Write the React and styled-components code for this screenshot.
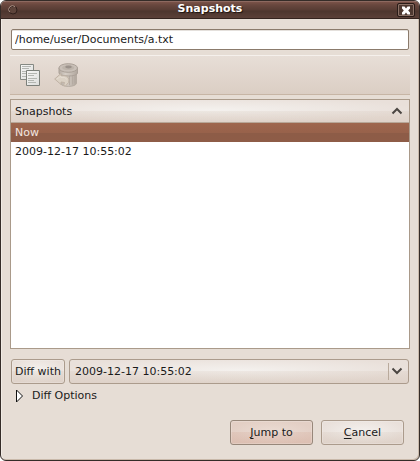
import React, { useState } from "react";
import styled, { createGlobalStyle } from "styled-components";

const GlobalStyle = createGlobalStyle`
  * { box-sizing: border-box; }
  body {
    margin: 0;
    background: #fff;
    color: #1a1a1a;
    font: 11px/15px "DejaVu Sans", sans-serif;
  }
  button, input, select { font: inherit; color: inherit; margin: 0; }
`;

const Window = styled.form`
  display: flex;
  flex-direction: column;
  min-height: 100vh;
  background: #e6ddd5;
  border: 1px solid #352c28;
  border-radius: 6px;
  box-shadow: inset -1px -1px #c9b9aa, inset 1px 0 #f1ebe5;
  overflow: hidden;
`;

const TitleBar = styled.header`
  display: grid;
  grid-template-columns: 24px 1fr 24px;
  grid-template-rows: 16px;
  align-items: center;
  height: 18px;
  background: linear-gradient(#7a5248 0, #68473e 3px, #573c34 8px, #4d362e 9px, #5b4038 16px);
  border-top: 1px solid #8d6960;
  border-bottom: 1px solid #34241f;
`;

const Title = styled.h1`
  margin: 0;
  padding-bottom: 2px;
  font-size: 11px;
  line-height: 12px;
  text-align: center;
  color: #fff;
  text-shadow: 1px 1px 1px #1c120f;
`;

const MenuButton = styled.button`
  display: flex;
  width: 10px;
  height: 10px;
  margin-left: 7px;
  padding: 0;
  border: 0;
  background: none;
`;

const CloseButton = styled.button`
  display: grid;
  place-items: center;
  width: 18px;
  height: 14px;
  justify-self: start;
  margin-left: 2px;
  padding: 0;
  border: 1px solid #291c18;
  border-radius: 2px;
  background: #4e3931;
  box-shadow: inset 0 0 0 1px #8b7166;
`;

const Content = styled.main`
  flex: 1;
  display: flex;
  flex-direction: column;
  padding: 10px 9px 15px;
`;

const PathInput = styled.input`
  height: 21px;
  margin: 0 1px 5px;
  padding: 0 3px 1px;
  border: 1px solid #8b7b6c;
  border-radius: 2px;
  background: #fff;
  outline: 0;
  box-shadow: inset 0 1px #e4e0dc;
`;

const Toolbar = styled.div`
  display: flex;
  align-items: center;
  gap: 12px;
  height: 40px;
  margin-bottom: 4px;
  padding-left: 8px;
  background: linear-gradient(#e7ded7, #dbcec4);
  border-top: 1px solid #f5f0ec;
  border-bottom: 1px solid #c7b5a5;
`;

const ToolButton = styled.button`
  display: flex;
  width: 24px;
  height: 24px;
  padding: 0;
  border: 0;
  background: none;
`;

const ListPanel = styled.div`
  flex: 1;
  background: #fff;
  border: 1px solid #aa9a8a;
`;

const Table = styled.table`
  width: 100%;
  border-collapse: collapse;

  th, td { padding: 0; text-align: left; }
`;

const glossy = `linear-gradient(
  #f0ebe700 0, #f0ebe700 50%, #c9b5a526 50%, #c9b5a552 100%
), radial-gradient(ellipse at 50% 45%, #f4f1ee, #e9e0da 75%)`;

const SortButton = styled.button`
  display: flex;
  align-items: center;
  justify-content: space-between;
  width: 100%;
  height: 23px;
  padding: 0 6px 0 4px;
  border: 0;
  border-bottom: 1px solid #b8a798;
  background: ${glossy};
  font-weight: normal;
`;

const Row = styled.tr`
  height: 19px;
  color: ${(p) => (p.$selected ? "#f2e6e0" : "#1a1a1a")};
  background: ${(p) =>
    p.$selected ? "linear-gradient(#9e664e, #98624b 50%, #8d5c47 50%, #8e5c47)" : "#fff"};

  td { padding: 0 4px 1px; }
`;

const DiffRow = styled.div`
  display: flex;
  gap: 4px;
  margin: 10px 1px 3px;
`;

const Button = styled.button`
  width: ${(p) => (p.$compact ? "54px" : "83px")};
  height: 25px;
  padding: 0;
  white-space: nowrap;
  border: 1px solid ${(p) => (p.$primary ? "#97877a" : "#ab9b8c")};
  border-radius: 3px;
  background: ${(p) =>
    p.$primary
      ? "linear-gradient(#ffffff00 50%, #c88f7826 50%, #c88f7840), radial-gradient(ellipse at center, #ebdcd4, #e3cfc5 75%)"
      : glossy};
  box-shadow: inset 0 0 0 1px #ffffff30;

  u { text-underline-offset: 2px; text-decoration-thickness: 1px; text-decoration-skip-ink: none; }
`;

const SelectFrame = styled.div`
  position: relative;
  flex: 1;
  display: flex;
`;

const Select = styled.select`
  appearance: none;
  width: 100%;
  height: 25px;
  padding: 0 24px 1px 5px;
  border: 1px solid #ab9b8c;
  border-radius: 3px;
  background: ${glossy};
  outline: 0;
`;

const SelectArrow = styled.span`
  position: absolute;
  top: 4px;
  right: 1px;
  display: grid;
  place-items: center;
  width: 20px;
  height: 17px;
  padding: 0 4px 1px 0;
  border-left: 1px solid #b9aa9c;
  pointer-events: none;
`;

const Expander = styled.button`
  display: flex;
  align-items: center;
  align-self: flex-start;
  gap: 7px;
  height: 16px;
  margin-bottom: 17px;
  padding: 0 0 0 5px;
  border: 0;
  background: none;

  svg { transform: ${(p) => (p.$open ? "rotate(90deg)" : "none")}; }
`;

const Triangle = styled.svg`
  margin-top: 2px;
`;

const Actions = styled.footer`
  display: flex;
  justify-content: flex-end;
  gap: 8px;
  padding-right: 6px;
`;

function Chevron({ up }) {
  return (
    <svg width="12" height="8" viewBox="0 0 12 8" fill="none" stroke="#4b4642" strokeWidth="2" aria-hidden="true">
      <path d={up ? "M1.500 6.500 6 2l4.500 4.500" : "M1.500 1.500 6 6l4.500-4.500"} />
    </svg>
  );
}

function MenuIcon() {
  return (
    <svg width="10" height="10" viewBox="0 0 10 10" fill="none" aria-hidden="true">
      <circle cx="5" cy="5" r="4" fill="#5d443b" stroke="#30201b" />
      <path d="M1.800 7.200A3.800 3.800 0 0 1 7.200 1.800" stroke="#a88f84" />
    </svg>
  );
}

function CloseIcon() {
  return (
    <svg width="10" height="9" viewBox="0 0 10 9" aria-hidden="true">
      <path d="M1 .5h2.500L5 2.500 6.500.5H9v2L7.200 4.500 9 6.500v2H6.500L5 6.500 3.500 8.500H1v-2l1.800-2L1 2.500z" fill="#fff" />
    </svg>
  );
}

function CopyIcon() {
  return (
    <svg width="24" height="24" viewBox="0 0 24 24" aria-hidden="true">
      <defs>
        <linearGradient id="paper" x2="1" y2="1">
          <stop stopColor="#f7f7f6" />
          <stop offset="1" stopColor="#dcdddb" />
        </linearGradient>
      </defs>
      <path d="M2.500 1.500h13v15h-13z" fill="url(#paper)" stroke="#858983" />
      <path d="M4 3.500h9M4 5.500h7M4 8.500h6M4 10.500h4M4 13.500h4" stroke="#b3b5b1" />
      <path d="M8.500 7.500h13v15h-13z" fill="url(#paper)" stroke="#7c807a" />
      <path d="M10 10.500h9M10 12.500h6M10 15.500h9M10 17.500h6M10 19.500h8" stroke="#b3b6b1" />
    </svg>
  );
}

function SnapshotIcon() {
  return (
    <svg width="24" height="24" viewBox="0 0 24 24" aria-hidden="true">
      <defs>
        <linearGradient id="can" x2="1">
          <stop stopColor="#b5aca3" />
          <stop offset=".35" stopColor="#d6cec6" />
          <stop offset=".7" stopColor="#c3bab1" />
          <stop offset="1" stopColor="#b0a69d" />
        </linearGradient>
      </defs>
      <path d="M6.500 9v11c0 4.500 16 4.500 16 0V9z" fill="url(#can)" stroke="#b5aba1" />
      <path d="M15.500 13v9M18.500 12v9.500M20.500 12v8" stroke="#b5aba2" />
      <path d="M5 5v5c0 4 18.500 4 18.500 0V5z" fill="url(#can)" stroke="#aba198" />
      <ellipse cx="14.200" cy="5" rx="9.300" ry="4.300" fill="#c9c0b8" stroke="#aaa097" />
      <ellipse cx="14.200" cy="4.700" rx="6" ry="2.400" fill="#bdb4ab" />
      <ellipse cx="14.500" cy="4" rx="3.200" ry="1.400" fill="#9b928b" />
      <path d="M.7 16 7 10.500v2.500c6-1.500 9 2 7.500 6.500L11.500 23l-2-.5 1-3-3.500-.5v2.500z" fill="#dbd1c4" stroke="#bfb2a4" />
      <path d="m3 16 4-3v1.500c3-.5 5 0 5.500 2" fill="none" stroke="#e6ddd2" />
    </svg>
  );
}

const snapshots = ["Now", "2009-12-17 10:55:02"];

export default function App() {
  const [selected, setSelected] = useState("Now");
  const [open, setOpen] = useState(false);

  return (
    <>
      <GlobalStyle />
      <Window onSubmit={(e) => e.preventDefault()}>
        <TitleBar>
          <MenuButton type="button" aria-label="Window menu">
            <MenuIcon />
          </MenuButton>
          <Title>Snapshots</Title>
          <CloseButton type="button" aria-label="Close">
            <CloseIcon />
          </CloseButton>
        </TitleBar>
        <Content>
          <PathInput aria-label="Path" defaultValue="/home/user/Documents/a.txt" />
          <Toolbar role="toolbar">
            <ToolButton type="button" aria-label="Copy">
              <CopyIcon />
            </ToolButton>
            <ToolButton type="button" aria-label="Restore" disabled>
              <SnapshotIcon />
            </ToolButton>
          </Toolbar>
          <ListPanel>
            <Table>
              <thead>
                <tr>
                  <th aria-sort="descending">
                    <SortButton type="button">
                      Snapshots
                      <Chevron up />
                    </SortButton>
                  </th>
                </tr>
              </thead>
              <tbody>
                {snapshots.map((name) => (
                  <Row
                    key={name}
                    $selected={name === selected}
                    aria-selected={name === selected}
                    onClick={() => setSelected(name)}
                  >
                    <td>{name}</td>
                  </Row>
                ))}
              </tbody>
            </Table>
          </ListPanel>
          <DiffRow>
            <Button type="button" $compact>Diff with</Button>
            <SelectFrame>
              <Select aria-label="Diff with snapshot" defaultValue={snapshots[1]}>
                {snapshots.map((name) => (
                  <option key={name}>{name}</option>
                ))}
              </Select>
              <SelectArrow>
                <Chevron />
              </SelectArrow>
            </SelectFrame>
          </DiffRow>
          <Expander type="button" $open={open} aria-expanded={open} onClick={() => setOpen(!open)}>
            <Triangle width="10" height="14" viewBox="0 0 10 14" aria-hidden="true">
              <path d="M1.500 1v12L7.500 7z" fill="#fff" stroke="#111" />
            </Triangle>
            Diff Options
          </Expander>
          <Actions>
            <Button type="submit" $primary>
              <u>J</u>ump to
            </Button>
            <Button type="button">
              <u>C</u>ancel
            </Button>
          </Actions>
        </Content>
      </Window>
    </>
  );
}
